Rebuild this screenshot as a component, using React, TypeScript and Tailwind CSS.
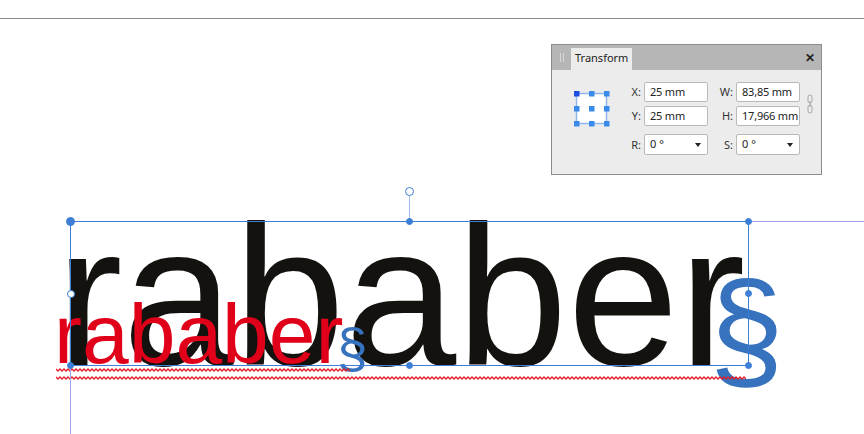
import React from 'react';

const SANS = "font-['Liberation_Sans',Arial,sans-serif]";
const UI = "font-['Noto_Sans','Open_Sans',sans-serif]";

function Handle({ x, y, size = 7, hollow = false }: { x: number; y: number; size?: number; hollow?: boolean }) {
  return (
    <div
      className={`absolute rounded-full border-[1.5px] border-[#3d7fd6] ${hollow ? 'bg-white' : 'bg-[#3d7fd6]'}`}
      style={{ left: x - size / 2, top: y - size / 2, width: size, height: size }}
    />
  );
}

function Squiggle({ x, y, width }: { x: number; y: number; width: number }) {
  const pts: string[] = [];
  for (let i = 0; i <= width; i += 2) pts.push(`${i},${(i / 2) % 2 === 0 ? 1 : 3}`);
  return (
    <svg className="absolute" style={{ left: x, top: y - 2 }} width={width} height={4}>
      <polyline points={pts.join(' ')} fill="none" stroke="#e0202a" strokeWidth={1.3} />
    </svg>
  );
}

function Field({ value }: { value: string }) {
  return (
    <div className="h-[20px] bg-white border border-[#b9b9b9] rounded-[2px] px-[5px] flex items-center text-[11px] text-[#222] whitespace-nowrap overflow-hidden tracking-[-0.2px]">
      {value}
    </div>
  );
}

function Select({ value }: { value: string }) {
  return (
    <div className="h-[21px] bg-white border border-[#b9b9b9] rounded-[2px] pl-[5px] pr-[6px] flex items-center justify-between text-[11px] text-[#222]">
      <span>{value}</span>
      <span className="w-0 h-0 border-l-[3px] border-r-[3px] border-t-[4px] border-l-transparent border-r-transparent border-t-[#222]" />
    </div>
  );
}

function Label({ children }: { children: React.ReactNode }) {
  return <div className="text-right pr-[3px] text-[11px] text-[#333] leading-[20px]">{children}</div>;
}

function AnchorIcon() {
  const c = [2.5, 17.5, 32.5];
  return (
    <svg width="36" height="36" viewBox="0 0 36 36">
      <rect x="2.5" y="2.5" width="30" height="30" fill="#fff" stroke="#8fb6ee" strokeWidth="1.5" />
      {c.map((cy) =>
        c.map((cx) => (
          <rect
            key={`${cx}-${cy}`}
            x={cx - 2.5}
            y={cy - 2.5}
            width="5.5"
            height="5.5"
            fill={cx === 2.5 && cy === 2.5 ? '#1b4fe0' : '#3a8aea'}
          />
        ))
      )}
    </svg>
  );
}

function TransformPanel() {
  return (
    <div className={`absolute left-[551px] top-[44px] w-[271px] h-[131px] border border-[#8c8c8c] bg-[#ececec] ${UI}`}>
      <div className="h-[25px] bg-[#b6b6b6] flex items-end">
        <div className="w-[19px] h-full flex items-center justify-center gap-[2px]">
          <span className="w-px h-[9px] bg-[#d8d8d8]" />
          <span className="w-px h-[9px] bg-[#d8d8d8]" />
        </div>
        <div className="h-[22px] px-[4px] bg-[#ececec] text-[11px] text-[#222] leading-[20px]">Transform</div>
        <div className="ml-auto mr-[6px] self-center text-[12px] font-bold text-[#222] leading-none">✕</div>
      </div>
      <div className="flex">
        <div className="pl-[22px] pt-[21px] w-[56px]">
          <AnchorIcon />
        </div>
        <div className="pt-[12px] grid grid-cols-[36px_64px_28px_64px_20px] gap-y-[4px] items-center">
          <Label>X:</Label>
          <Field value="25 mm" />
          <Label>W:</Label>
          <Field value="83,85 mm" />
          <div className="row-span-2 flex justify-center">
            <svg width="6" height="20" viewBox="0 0 6 20">
              <rect x="1" y="1" width="4" height="8" rx="2" fill="none" stroke="#a8a8a8" />
              <rect x="1" y="11" width="4" height="8" rx="2" fill="none" stroke="#a8a8a8" />
              <line x1="3" y1="7" x2="3" y2="13" stroke="#a8a8a8" />
            </svg>
          </div>
          <Label>Y:</Label>
          <Field value="25 mm" />
          <Label>H:</Label>
          <Field value="17,966 mm" />
          <div className="mt-[4px]"><Label>R:</Label></div>
          <div className="mt-[4px]"><Select value="0 °" /></div>
          <div className="mt-[4px]"><Label>S:</Label></div>
          <div className="mt-[4px]"><Select value="0 °" /></div>
        </div>
      </div>
    </div>
  );
}

export default function App() {
  return (
    <div className="relative w-[864px] h-[434px] bg-white overflow-hidden">
      <div className="absolute left-0 top-[18px] w-full h-px bg-[#8a8a8a]" />

      {/* canvas text */}
      <div className={`absolute left-[56px] top-[196px] text-[200px] leading-none text-[#13120e] whitespace-nowrap ${SANS}`}>
        rababer
      </div>
      <div className={`absolute left-[709px] top-[262px] text-[135px] leading-none text-[#3672bd] ${SANS}`}>
        §
      </div>
      <div className={`absolute left-[54px] top-[292px] text-[84px] leading-none text-[#e1001a] whitespace-nowrap ${SANS}`}>
        rababer
      </div>
      <div className={`absolute left-[337px] top-[321px] text-[55px] leading-none text-[#3672bd] ${SANS}`}>
        §
      </div>

      <Squiggle x={56} y={370} width={294} />
      <Squiggle x={56} y={378} width={690} />

      {/* guides */}
      <div className="absolute left-[70px] top-[365px] w-px h-[70px] bg-[#a3a3e6]" />
      <div className="absolute left-[748px] top-[221px] w-[116px] h-px bg-[#9d9de8]" />

      {/* selection box */}
      <div className="absolute left-[70px] top-[221px] w-[679px] h-[145px] border border-[#3d7fd6]" />
      <div className="absolute left-[409px] top-[195px] w-px h-[26px] bg-[#9dbcec]" />
      <Handle x={409.5} y={191} size={9} hollow />
      <Handle x={70.5} y={221.5} size={9} />
      <Handle x={409.5} y={221.5} size={7} />
      <Handle x={748.5} y={221.5} size={7} />
      <Handle x={70.5} y={293.5} size={8} hollow />
      <Handle x={748.5} y={293.5} size={7} />
      <Handle x={70.5} y={365.5} size={7} />
      <Handle x={409.5} y={365.5} size={7} />
      <Handle x={748.5} y={365.5} size={7} />

      <TransformPanel />
    </div>
  );
}
